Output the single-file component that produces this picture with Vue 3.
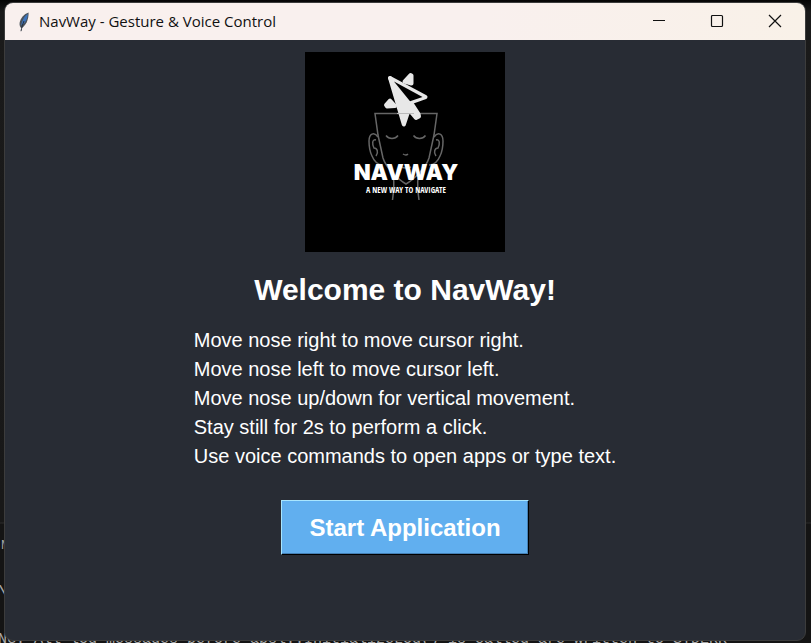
<script setup>
const title = 'NavWay - Gesture & Voice Control'
const steps = [
  'Move nose right to move cursor right.',
  'Move nose left to move cursor left.',
  'Move nose up/down for vertical movement.',
  'Stay still for 2s to perform a click.',
  'Use voice commands to open apps or type text.',
]
</script>

<template>
  <div class="desktop">
    <div class="terminal" aria-hidden="true">
      <span class="tab">M</span>
      <span class="path">\</span>
      <span class="log">NG: All log messages before absl::InitializeLog() is called are written to STDERR</span>
    </div>

    <section class="window">
      <header class="titlebar">
        <svg class="feather" viewBox="0 0 12 20" aria-hidden="true">
          <path d="M10.600 .5C6 2 2.400 6 1.600 11c-.2 1.600.1 3.200 1 4.600l1.200.4C7.600 13.500 10.800 8 10.600.5z" fill="#4b535c" />
          <path d="M9.800 1.800C6.500 4 4 8.500 3.200 13.500 7 11.500 9.700 7 9.800 1.800z" fill="#3c74bd" />
          <path d="M6 9C4.800 12 3.800 15 3 19.200" fill="none" stroke="#26303c" stroke-width="1" />
        </svg>
        <span class="title">{{ title }}</span>
        <div class="controls">
          <button type="button" aria-label="Minimize">
            <svg viewBox="0 0 14 14"><path d="M1 6.500h12" /></svg>
          </button>
          <button type="button" aria-label="Maximize">
            <svg viewBox="0 0 14 14"><rect x="1.500" y="1.500" width="11" height="11" rx="1" /></svg>
          </button>
          <button type="button" aria-label="Close">
            <svg viewBox="0 0 14 14"><path d="M1 1l12 12M13 1L1 13" /></svg>
          </button>
        </div>
      </header>

      <main class="content">
        <svg class="logo" viewBox="0 0 200 200" role="img" aria-label="NavWay logo">
          <rect width="200" height="200" fill="#000" />
          <g fill="none" stroke="#666" stroke-width="1.500">
            <path d="M78 106L73 83 70 61.500h62L129 83l-5 23c-3 10-16 22-23 26-7-4-20-16-23-26z" />
            <path d="M73 85c-4-6-9-3-9 4 0 6 1 11 3 15 2 5 5 9 11 9" />
            <path d="M71 88c-4-1-4 4-2 8 3 0 5 4 2 8" />
            <path d="M129 85c4-6 9-3 9 4 0 6-1 11-3 15-2 5-5 9-11 9" />
            <path d="M131 88c4-1 4 4 2 8-3 0-5 4-2 8" />
            <path d="M81 83.500c3 4 9 4 12 0M108.500 83.500c3 4 9 4 12 0M98 102q3 2 5 0" />
            <path d="M96 115q5 2 10 0" />
            <path d="M88.500 126c1 8 0 15-1 22M113 126c-1 8 0 15 1 22" />
          </g>
          <g fill="#e8e8e8" stroke="#e8e8e8" stroke-width="4" stroke-linejoin="round">
            <path d="M99.500 29.500l6-6.500 1 .500v8z" />
            <path d="M85 48.500l-4 4.500 1 1.500 8-.5z" />
            <path d="M85 26L98.800 72.500l5-15 7.200 8.500 3-1.500-.500-2.500-6.500-10z" />
            <path d="M85 26L120.500 45 105 50.500z" />
          </g>
          <path d="M89 29.500L117.500 45 105 49.300z" fill="#000" />
          <path d="M92 61.500h17" stroke="#bbb" />
          <text class="brand" x="101" y="128" text-anchor="middle">NAVWAY</text>
          <text class="tagline" x="101" y="141" text-anchor="middle">A NEW WAY TO NAVIGATE</text>
        </svg>

        <h1>Welcome to NavWay!</h1>

        <div class="steps">
          <p v-for="step in steps" :key="step">{{ step }}</p>
        </div>

        <button type="button" class="start">Start Application</button>
      </main>
    </section>
  </div>
</template>

<style>
body {
  margin: 0;
  background: #141414;
}
</style>

<style scoped>
.desktop {
  position: relative;
  display: flex;
  box-sizing: border-box;
  min-height: 100vh;
  padding: 2px 5px 2px 4px;
  overflow: hidden;
  background: linear-gradient(#050505, #1a1a1a 12px, #181818 522px, #2b2b2b 523px, #141414 524px);
}

.terminal {
  position: absolute;
  inset: 0;
  color: #a8a8a8;
  font: 15px/18px "Liberation Mono", monospace;
  white-space: pre;
}

.terminal span {
  position: absolute;
  left: -2px;
}

.terminal .tab {
  left: 1px;
  bottom: 90px;
  font: 12px/16px "Liberation Sans", sans-serif;
}

.terminal .path {
  bottom: 41px;
  font-size: 18px;
}

.terminal .log {
  bottom: -6px;
}

.window {
  position: relative;
  flex: 1;
  display: flex;
  flex-direction: column;
  border: 1px solid #3c3c3c;
  border-radius: 9px;
  overflow: hidden;
  background: #282c34;
}

.titlebar {
  display: flex;
  align-items: center;
  height: 37px;
  padding-left: 13px;
  background: linear-gradient(90deg, #f9f0ee, #f9f0ee 60%, #f9f1e8);
  color: #111;
}

.feather {
  width: 12px;
  height: 20px;
  margin-right: 9px;
}

.title {
  flex: 1;
  padding-bottom: 2px;
  font: 15px/20px "Open Sans", "Noto Sans", sans-serif;
  white-space: nowrap;
}

.controls {
  display: flex;
  height: 100%;
  padding-right: 1px;
}

.controls button {
  display: flex;
  align-items: center;
  justify-content: center;
  width: 58px;
  padding: 0 1px 2px 0;
  border: 0;
  background: none;
}

.controls svg {
  width: 14px;
  height: 14px;
  fill: none;
  stroke: #111;
  stroke-width: 1.2;
}

.content {
  display: flex;
  flex-direction: column;
  align-items: center;
  padding: 12px 0;
  color: #fff;
  font-family: "Liberation Sans", Arial, sans-serif;
}

.logo {
  width: 200px;
  height: 200px;
}

.brand {
  fill: #fff;
  font: 900 22px Inter, sans-serif;
}

.tagline {
  fill: #fff;
  font: bold 8px "Liberation Sans Narrow", "Open Sans Condensed", sans-serif;
}

h1 {
  margin: 20px 0 0;
  font-size: 30px;
  line-height: 36px;
}

.steps {
  margin-top: 18px;
  font-size: 20px;
  line-height: 29px;
}

.steps p {
  margin: 0;
}

.start {
  margin-top: 29px;
  padding: 12px 27px;
  border: 1px solid;
  border-color: #a9e6ff #000 #000 #a9e6ff;
  box-shadow: inset -1px -1px #4580b4;
  background: #61afef;
  color: #fff;
  font: bold 24px/29px "Liberation Sans", Arial, sans-serif;
}
</style>
